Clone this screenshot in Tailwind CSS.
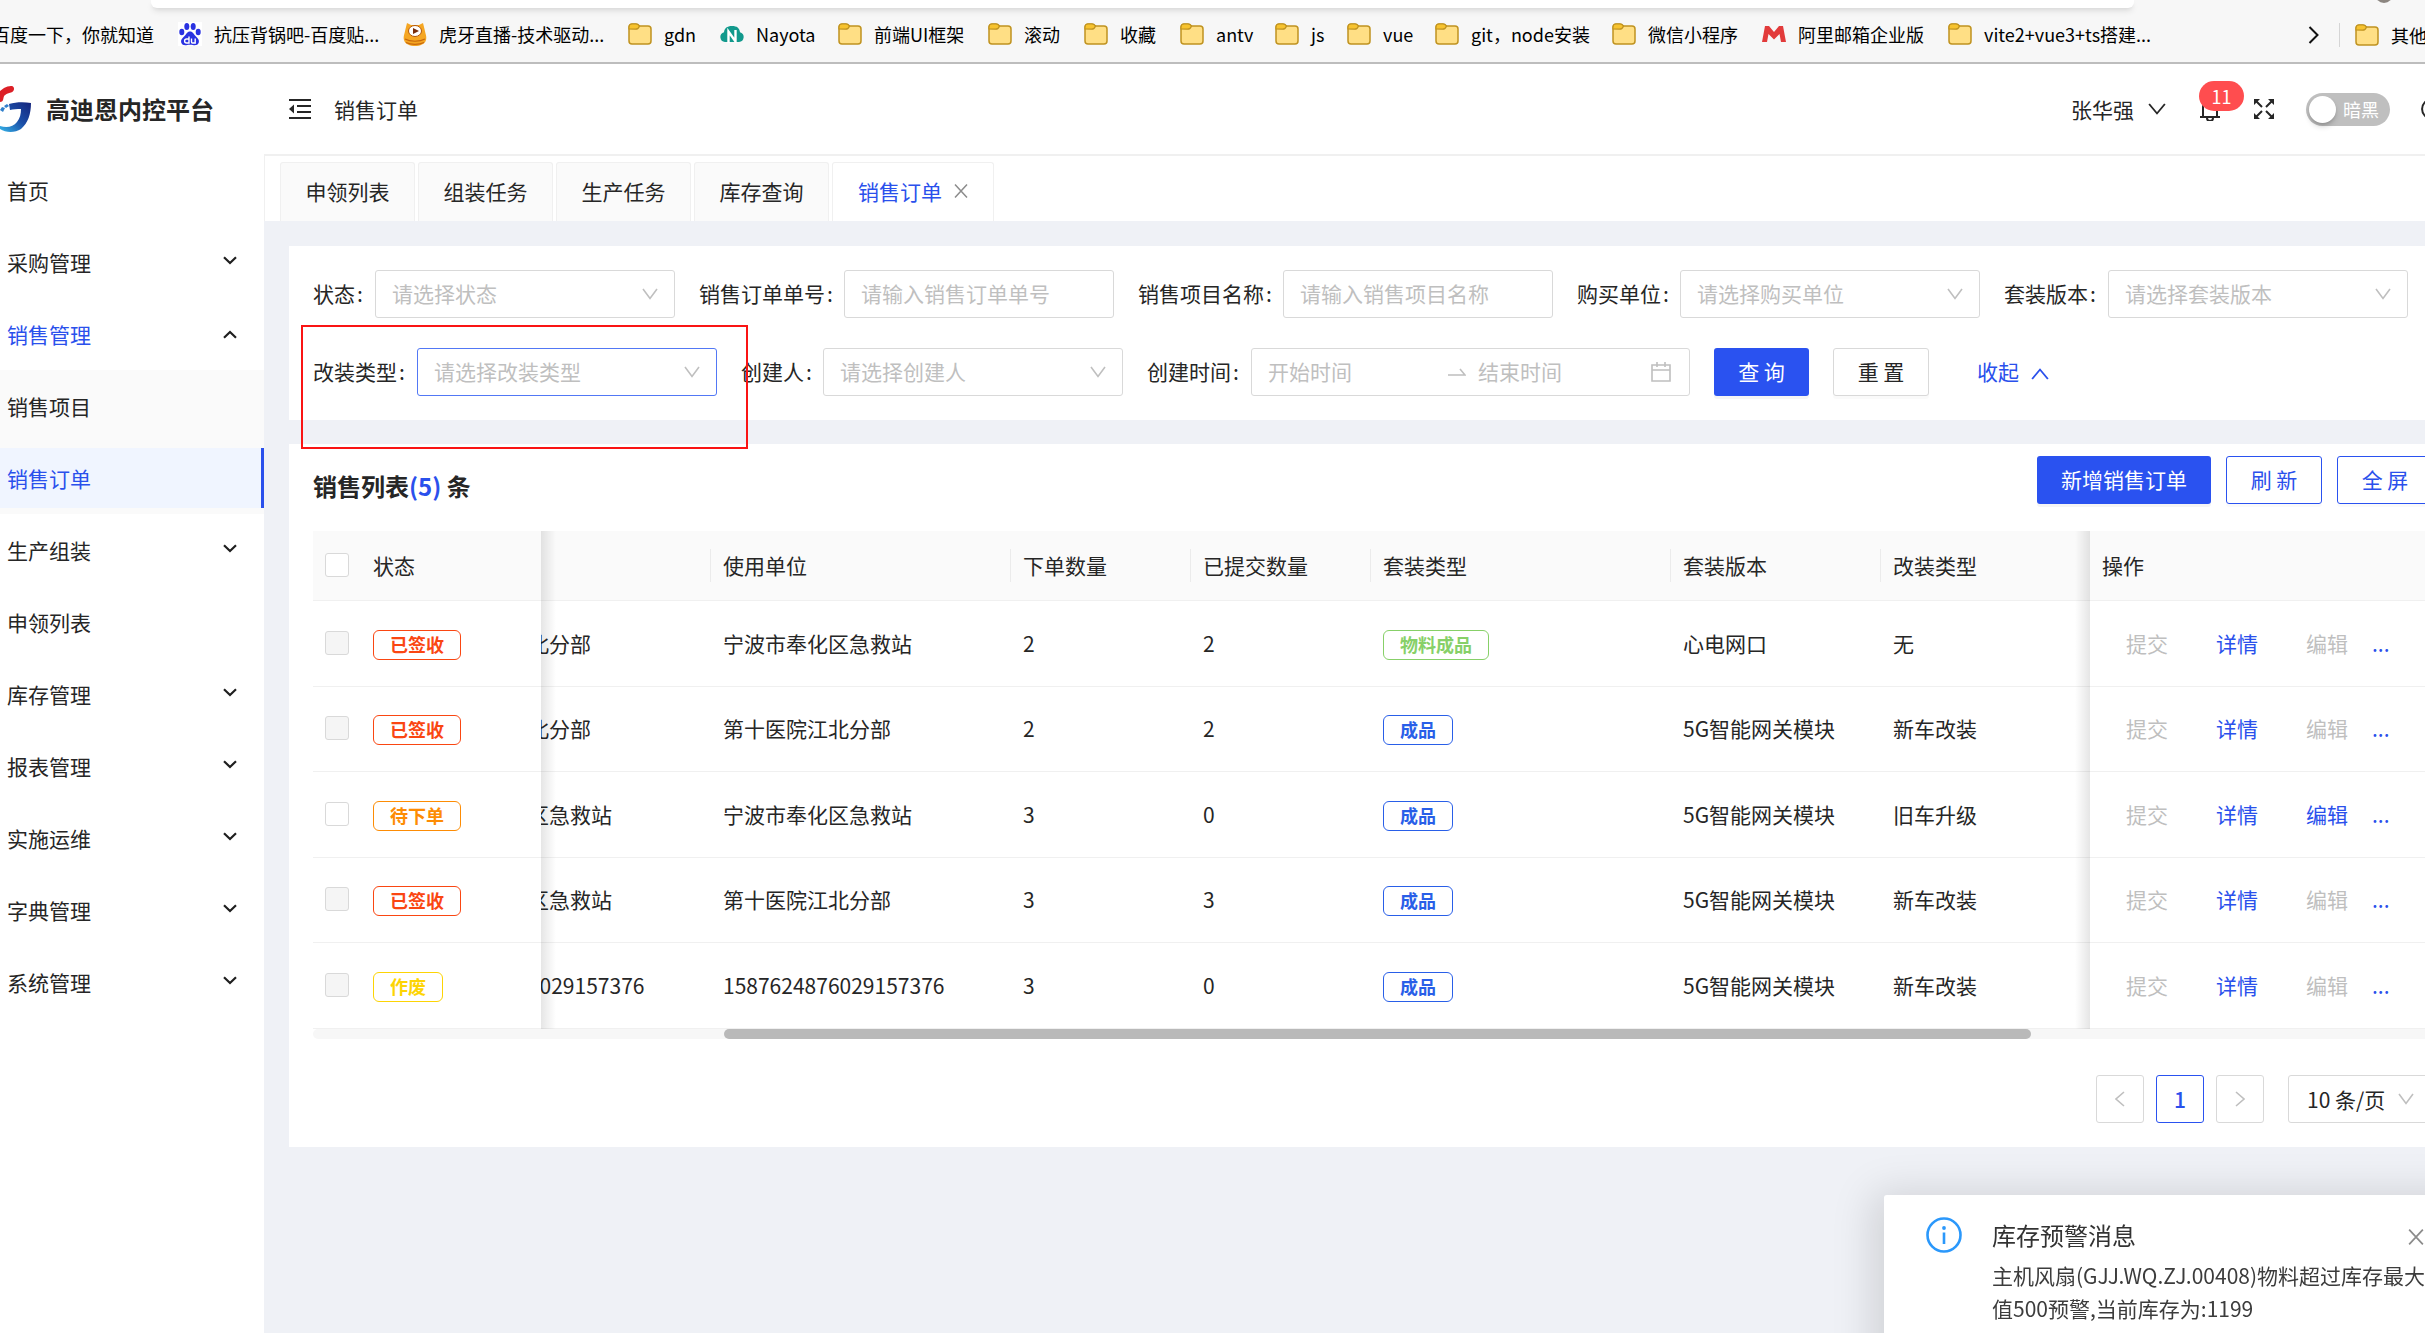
<!DOCTYPE html>
<html lang="zh-CN">
<head>
<meta charset="utf-8">
<title>高迪恩内控平台</title>
<script src="https://cdn.jsdelivr.net/npm/@tailwindcss/browser@4"></script>
</head>
<body class="overflow-hidden bg-[#eff1f6] font-['Noto_Sans_CJK_SC',sans-serif] text-[21px] leading-8 text-[#262626]">
<svg class="hidden">
  <symbol id="folder" viewBox="0 0 24 22"><path d="M1 4a3 3 0 0 1 3-3h4c2 0 3 1.400 3.500 2H20a3 3 0 0 1 3 3v12a3 3 0 0 1-3 3H4a3 3 0 0 1-3-3z" fill="#ffdf85" stroke="#c09320" stroke-width="1.500"/><path d="M1 6V4a3 3 0 0 1 3-3h4c2 0 3 1.400 3.500 2-.6 2-1.800 3.200-4 3.200z" fill="#f7c32f" stroke="#c09320" stroke-width="1.200"/></symbol>
  <symbol id="down" viewBox="0 0 16 12"><path d="M1 1l7 9.500L15 1" fill="none" stroke="currentColor" stroke-width="1.600"/></symbol>
  <symbol id="caret" viewBox="0 0 14 9"><path d="M1 1.200l6 5.800 6-5.800" fill="none" stroke="#1f1f1f" stroke-width="2.200"/></symbol>
  <symbol id="cross" viewBox="0 0 14 14"><path d="M1 0.500l12 13M13 0.500l-12 13" fill="none" stroke="currentColor" stroke-width="1.500"/></symbol>
</svg>

<nav class="relative flex h-16 items-center overflow-hidden border-b-2 border-[#bdbdbd] bg-[#f7f7f7] pt-[6px] text-[18px] leading-6 whitespace-nowrap text-black" aria-label="收藏夹栏">
  <div class="absolute top-0 right-[291px] left-[151px] h-2 rounded-b-md bg-white shadow-md shadow-black/10"></div>
  <div class="absolute -top-[15px] right-[32px] size-[18px] rounded-full bg-[#8c8680]"></div>
  <div class="-ml-2 flex shrink-0 gap-6">
    <a href="#" class="w-[162px]">百度一下，你就知道</a>
    <a href="#" class="flex w-[201px] items-center gap-3">
      <svg class="size-6 shrink-0 bg-white" viewBox="0 0 24 24" fill="#2932e1"><ellipse cx="3.800" cy="10" rx="2.500" ry="3.300"/><ellipse cx="8.800" cy="4.600" rx="2.500" ry="3.500"/><ellipse cx="15.200" cy="4.600" rx="2.500" ry="3.500"/><ellipse cx="20.200" cy="10" rx="2.500" ry="3.300"/><path d="M12 9.500c-3 0-3.500 2.500-5.500 4.500C4 16.300 2.500 18 3.200 20.500c.8 3 4 3 6 2.500 2-.4 3.600-.4 5.600 0s5.200.5 6-2.500c.7-2.500-.8-4.200-3.300-6.500-2-2-2.500-4.500-5.500-4.500z"/><path d="M11 14.500v6.500H8.600a2 2 0 1 1 0-4H11M13.500 16.500V20c0 .7.300 1 1 1h2.700v-4.500" fill="none" stroke="#fff" stroke-width="1.400"/></svg>抗压背锅吧-百度贴...</a>
    <a href="#" class="flex w-[201px] items-center gap-3">
      <svg class="size-6 shrink-0" viewBox="0 0 24 24"><path d="M4 1l4 2h8l4-2 1.500 6c1 5 2.500 8 1.500 11-1 4-6 6-11 6S2 22 1 18c-1-3 .5-6 1.500-11z" fill="#f5a623"/><path d="M2 17c5 3 15 3 20 0M3 20.500c5 2.500 13 2.500 18 0" stroke="#c8680c" stroke-width="1.200" fill="none"/><ellipse cx="12" cy="9" rx="6.500" ry="5.500" fill="#fff" stroke="#b4580a"/><path d="M10 6l6 3-6 3z" fill="#7a2e0c"/></svg>虎牙直播-技术驱动...</a>
    <a href="#" class="flex w-[68px] items-center gap-3"><svg class="h-[22px] w-6 shrink-0"><use href="#folder"/></svg>gdn</a>
    <a href="#" class="flex w-[94px] items-center gap-3">
      <svg class="h-[18px] w-6 shrink-0" viewBox="0 2 24 18"><path d="M5 19a5 5 0 0 1-1-9.800c.5-4 3-6.200 8-6.200s7.500 2 8 6.200a5 5 0 0 1-1 9.800z" fill="#12998c"/><path d="M8.500 20V8.500l7 10V7" stroke="#fff" stroke-width="2.400" fill="none"/></svg>Nayota</a>
    <a href="#" class="flex w-[126px] items-center gap-3"><svg class="h-[22px] w-6 shrink-0"><use href="#folder"/></svg>前端UI框架</a>
    <a href="#" class="flex w-[72px] items-center gap-3"><svg class="h-[22px] w-6 shrink-0"><use href="#folder"/></svg>滚动</a>
    <a href="#" class="flex w-[72px] items-center gap-3"><svg class="h-[22px] w-6 shrink-0"><use href="#folder"/></svg>收藏</a>
    <a href="#" class="flex w-[71px] items-center gap-3"><svg class="h-[22px] w-6 shrink-0"><use href="#folder"/></svg>antv</a>
    <a href="#" class="flex w-[48px] items-center gap-3"><svg class="h-[22px] w-6 shrink-0"><use href="#folder"/></svg>js</a>
    <a href="#" class="flex w-[64px] items-center gap-3"><svg class="h-[22px] w-6 shrink-0"><use href="#folder"/></svg>vue</a>
    <a href="#" class="flex w-[153px] items-center gap-3"><svg class="h-[22px] w-6 shrink-0"><use href="#folder"/></svg>git，node安装</a>
    <a href="#" class="flex w-[126px] items-center gap-3"><svg class="h-[22px] w-6 shrink-0"><use href="#folder"/></svg>微信小程序</a>
    <a href="#" class="flex w-[162px] items-center gap-3">
      <svg class="h-4 w-6 shrink-0" viewBox="0 0 24 16"><path d="M0 16L3 0h4l5 6 5-6h4l3 16h-5l-1.500-8L12 13.500 6.500 8 5 16z" fill="#e23b3b"/></svg>阿里邮箱企业版</a>
    <a href="#" class="flex w-[200px] items-center gap-3"><svg class="h-[22px] w-6 shrink-0"><use href="#folder"/></svg>vite2+vue3+ts搭建...</a>
  </div>
  <div class="absolute right-0 bottom-0 flex h-[54px] items-center">
    <button aria-label="更多收藏"><svg class="mr-5 h-[18px] w-[11px]" viewBox="0 0 11 18"><path d="M1.500 1l8 8-8 8" fill="none" stroke="#111" stroke-width="2"/></svg></button>
    <span class="mr-[15px] h-6 w-px bg-[#d5d5d5]"></span>
    <a href="#" class="flex w-[70px] items-center gap-3 overflow-hidden"><svg class="h-[22px] w-6 shrink-0"><use href="#folder"/></svg>其他收藏夹</a>
  </div>
</nav>

<div class="-mr-[71px] flex min-h-[calc(100vh-64px)]">
  <aside class="w-[264px] shrink-0 bg-white">
    <div class="flex h-[90px] items-center text-[24px] font-bold">
      <svg class="mr-[15px] h-[46px] w-[31px]" viewBox="0 0 31 46"><defs><linearGradient id="lg" x1="0" y1="1" x2="1" y2="0"><stop offset="0" stop-color="#35b5e9"/><stop offset=".5" stop-color="#1b4fa8"/><stop offset="1" stop-color="#15247c"/></linearGradient></defs><path d="M4 2c3-1.500 7-2.500 9-1.500 2 1.500 1 5-2 6C6 8 4 9 3.500 12c-.5 3-1.500 4-3.500 4V5z" fill="#dc2027"/><path d="M9 18c7-2 15-2 22-1 0 11-3 20-10 26-6 4-15 4-21 0v-3c7 2 13 1 17-4 3-4 4-8 4-13-4 0-8 0-11 1z" fill="url(#lg)"/><path d="M0 24l2-3 3 1-2 4zM4 20l3-2 2 2-3 2z" fill="#2f7fcb"/></svg>
      <h1>高迪恩内控平台</h1>
    </div>
    <ul class="flex flex-col gap-3 pt-[6px]" id="menu">
      <li><a href="#" class="flex h-[60px] items-center pl-[7px]">首页</a></li>
      <li><a href="#" class="flex h-[60px] items-center justify-between pr-[27px] pl-[7px]">采购管理<svg class="mb-1 h-[9px] w-[14px]"><use href="#caret"/></svg></a></li>
      <li><a href="#" class="flex h-[60px] items-center justify-between pr-[27px] pl-[7px] text-[#2a50ec]">销售管理<svg class="h-[9px] w-[14px] rotate-180"><use href="#caret"/></svg></a></li>
      <li class="-mt-[6px] -mb-2 flex flex-col gap-3 bg-[#fafafa] py-[6px]">
        <a href="#" class="flex h-[60px] items-center pl-[7px]">销售项目</a>
        <a href="#" aria-current="page" class="flex h-[60px] items-center border-r-[3px] border-[#2a50ec] bg-[#f0f5ff] pl-[7px] text-[#2a50ec]">销售订单</a>
      </li>
      <li class="pt-[2px]"><a href="#" class="flex h-[60px] items-center justify-between pr-[27px] pl-[7px]">生产组装<svg class="mb-1 h-[9px] w-[14px]"><use href="#caret"/></svg></a></li>
      <li><a href="#" class="flex h-[60px] items-center pl-[7px]">申领列表</a></li>
      <li><a href="#" class="flex h-[60px] items-center justify-between pr-[27px] pl-[7px]">库存管理<svg class="mb-1 h-[9px] w-[14px]"><use href="#caret"/></svg></a></li>
      <li><a href="#" class="flex h-[60px] items-center justify-between pr-[27px] pl-[7px]">报表管理<svg class="mb-1 h-[9px] w-[14px]"><use href="#caret"/></svg></a></li>
      <li><a href="#" class="flex h-[60px] items-center justify-between pr-[27px] pl-[7px]">实施运维<svg class="mb-1 h-[9px] w-[14px]"><use href="#caret"/></svg></a></li>
      <li><a href="#" class="flex h-[60px] items-center justify-between pr-[27px] pl-[7px]">字典管理<svg class="mb-1 h-[9px] w-[14px]"><use href="#caret"/></svg></a></li>
      <li><a href="#" class="flex h-[60px] items-center justify-between pr-[27px] pl-[7px]">系统管理<svg class="mb-1 h-[9px] w-[14px]"><use href="#caret"/></svg></a></li>
    </ul>
  </aside>

  <main class="min-w-0 flex-1">
    <header class="flex h-[92px] items-center border-b-2 border-[#f0f0f0] bg-white pl-[25px]">
      <button aria-label="收起菜单"><svg class="h-5 w-[22px]" viewBox="0 0 22 20"><path d="M0 1h22M8 7h14M8 13h14M0 19h22" stroke="#262626" stroke-width="2"/><path d="M5 5.500v9L0 10z" fill="#262626"/></svg></button>
      <span class="ml-[23px]">销售订单</span>
      <div class="ml-auto flex items-center pr-[53px]">
        <button class="flex items-center gap-[14px]">张华强<svg class="h-3 w-[18px]" viewBox="0 0 16 12" preserveAspectRatio="none"><use href="#down"/></svg></button>
        <button class="relative ml-[34px] h-6 w-5" aria-label="消息">
          <svg class="h-6 w-5" viewBox="0 0 20 24"><path d="M0 20h20M3 20V10a7 7 0 0 1 14 0v10M7 21a3 3 0 0 0 6 0M10 1v2" fill="none" stroke="#262626" stroke-width="2"/></svg>
          <span class="absolute -top-[16px] -left-px h-[30px] w-[45px] rounded-full bg-[#ff4d4f] text-center text-[18px] leading-[30px] text-white">11</span>
        </button>
        <button class="ml-[34px]" aria-label="全屏"><svg class="size-5" viewBox="0 0 20 20"><path d="M2 2l6 6M18 2l-6 6M2 18l6-6M18 18l-6-6" stroke="#262626" stroke-width="2"/><path d="M0 0h6L0 6zM20 0h-6l6 6zM0 20h6l-6-6zM20 20h-6l6-6z" fill="#262626"/></svg></button>
        <button role="switch" aria-checked="false" class="ml-8 flex h-[33px] w-[84px] items-center rounded-full bg-[#bfbfbf] pl-[3px] text-[18px] text-white"><span class="mr-[7px] size-[27px] rounded-full bg-white shadow-md shadow-black/20"></span>暗黑</button>
        <button class="ml-[31px]" aria-label="退出"><svg class="size-[22px]" viewBox="0 0 22 22"><path d="M17 4a9.500 9.500 0 1 0 0 14" fill="none" stroke="#262626" stroke-width="2"/></svg></button>
      </div>
    </header>

    <div class="flex h-[65px] items-end gap-[3px] border-l border-[#f0f0f0] bg-white pl-[15px]">
      <button class="h-[59px] w-[135px] rounded-t-[3px] border border-b-0 border-[#f0f0f0] bg-[#fafafa] pb-[2px]">申领列表</button>
      <button class="h-[59px] w-[135px] rounded-t-[3px] border border-b-0 border-[#f0f0f0] bg-[#fafafa] pb-[2px]">组装任务</button>
      <button class="h-[59px] w-[135px] rounded-t-[3px] border border-b-0 border-[#f0f0f0] bg-[#fafafa] pb-[2px]">生产任务</button>
      <button class="h-[59px] w-[135px] rounded-t-[3px] border border-b-0 border-[#f0f0f0] bg-[#fafafa] pb-[2px]">库存查询</button>
      <button class="flex h-[59px] items-center gap-3 rounded-t-[3px] border border-b-0 border-[#f0f0f0] bg-white px-[25px] pb-[2px] text-[#2a50ec]">销售订单<svg class="size-[14px] text-[#8c8c8c]"><use href="#cross"/></svg></button>
    </div>

    <div class="flex flex-col gap-6 py-[25px] pr-6 pl-[25px]">
      <form class="relative flex flex-col gap-[30px] bg-white p-6 whitespace-nowrap">
        <div class="flex gap-6">
          <div class="flex h-12 items-center"><label for="f1" class="pr-3 pb-[2px]">状态<span class="inline-block w-2 pl-[2px]">:</span></label><div class="relative"><select id="f1" class="h-12 w-[300px] appearance-none rounded-[3px] border border-[#d9d9d9] bg-white px-4 pb-[2px] text-[#bfbfbf]"><option>请选择状态</option></select><svg class="pointer-events-none absolute top-[18px] right-[17px] h-3 w-4 text-[#bfbfbf]"><use href="#down"/></svg></div></div>
          <div class="flex h-12 items-center"><label for="f2" class="pr-[11px] pb-[2px]">销售订单单号<span class="inline-block w-2 pl-[2px]">:</span></label><input id="f2" placeholder="请输入销售订单单号" class="h-12 w-[270px] rounded-[3px] border border-[#d9d9d9] px-4 pb-[2px] placeholder:text-[#bfbfbf]"></div>
          <div class="flex h-12 items-center"><label for="f3" class="pr-[11px] pb-[2px]">销售项目名称<span class="inline-block w-2 pl-[2px]">:</span></label><input id="f3" placeholder="请输入销售项目名称" class="h-12 w-[270px] rounded-[3px] border border-[#d9d9d9] px-4 pb-[2px] placeholder:text-[#bfbfbf]"></div>
          <div class="flex h-12 items-center"><label for="f4" class="pr-[11px] pb-[2px]">购买单位<span class="inline-block w-2 pl-[2px]">:</span></label><div class="relative"><select id="f4" class="h-12 w-[300px] appearance-none rounded-[3px] border border-[#d9d9d9] bg-white px-4 pb-[2px] text-[#bfbfbf]"><option>请选择购买单位</option></select><svg class="pointer-events-none absolute top-[18px] right-[17px] h-3 w-4 text-[#bfbfbf]"><use href="#down"/></svg></div></div>
          <div class="flex h-12 items-center"><label for="f5" class="pr-3 pb-[2px]">套装版本<span class="inline-block w-2 pl-[2px]">:</span></label><div class="relative"><select id="f5" class="h-12 w-[300px] appearance-none rounded-[3px] border border-[#d9d9d9] bg-white px-4 pb-[2px] text-[#bfbfbf]"><option>请选择套装版本</option></select><svg class="pointer-events-none absolute top-[18px] right-[17px] h-3 w-4 text-[#bfbfbf]"><use href="#down"/></svg></div></div>
        </div>
        <div class="flex gap-6">
          <div class="flex h-12 items-center"><label for="f6" class="pr-3 pb-[2px]">改装类型<span class="inline-block w-2 pl-[2px]">:</span></label><div class="relative"><select id="f6" class="h-12 w-[300px] appearance-none rounded-[3px] border border-[#5278f5] bg-white px-4 pb-[2px] text-[#bfbfbf]"><option>请选择改装类型</option></select><svg class="pointer-events-none absolute top-[18px] right-[17px] h-3 w-4 text-[#bfbfbf]"><use href="#down"/></svg></div></div>
          <div class="flex h-12 items-center"><label for="f7" class="pr-[11px] pb-[2px]">创建人<span class="inline-block w-2 pl-[2px]">:</span></label><div class="relative"><select id="f7" class="h-12 w-[300px] appearance-none rounded-[3px] border border-[#d9d9d9] bg-white px-4 pb-[2px] text-[#bfbfbf]"><option>请选择创建人</option></select><svg class="pointer-events-none absolute top-[18px] right-[17px] h-3 w-4 text-[#bfbfbf]"><use href="#down"/></svg></div></div>
          <div class="flex h-12 items-center"><label for="f8" class="pr-3 pb-[2px]">创建时间<span class="inline-block w-2 pl-[2px]">:</span></label>
            <div class="flex h-12 w-[439px] items-center rounded-[3px] border border-[#d9d9d9] px-4">
              <input id="f8" placeholder="开始时间" class="w-[180px] min-w-0 pb-[2px] placeholder:text-[#bfbfbf]">
              <svg class="mr-3 h-2 w-[18px] shrink-0 text-[#bfbfbf]" viewBox="0 0 18 8"><path d="M0 7h17l-5-6" fill="none" stroke="currentColor" stroke-width="1.600"/></svg>
              <input aria-label="结束时间" placeholder="结束时间" class="w-[173px] min-w-0 pb-[2px] placeholder:text-[#bfbfbf]">
              <svg class="h-5 w-[20px] shrink-0" viewBox="0 0 20 20"><path d="M1 3h18v16H1zM1 8h18M6 0v5M14 0v5" fill="none" stroke="#bfbfbf" stroke-width="1.600"/></svg>
            </div></div>
          <button type="button" class="h-12 w-[95px] rounded-[3px] bg-[#2a52f0] pb-[2px] text-white shadow-[0_3px_0_rgba(0,0,0,0.04)]">查 询</button>
          <button type="button" class="h-12 w-24 rounded-[3px] border border-[#d9d9d9] bg-white pb-[2px] shadow-[0_3px_0_rgba(0,0,0,0.02)]">重 置</button>
          <button type="button" class="ml-6 flex items-center gap-3 pb-[2px] text-[#2a50ec]">收起<svg class="mt-[6px] h-3 w-[18px] rotate-180" viewBox="0 0 16 12" preserveAspectRatio="none"><use href="#down"/></svg></button>
        </div>
        <div class="pointer-events-none absolute top-[79px] left-3 z-10 h-[124px] w-[447px] border-2 border-[#fa1414]"></div>
      </form>

      <section class="bg-white px-6 pb-6">
        <div class="flex h-[87px] items-start justify-between pt-3">
          <h2 class="pt-[14px] text-[24px] font-bold">销售列表<span class="text-[#2a50ec]">(5)</span> 条</h2>
          <div class="flex gap-[15px] pr-[15px]">
            <button class="h-12 w-[174px] rounded-[3px] bg-[#2a52f0] pb-[2px] text-white shadow-[0_3px_0_rgba(0,0,0,0.04)]">新增销售订单</button>
            <button class="h-12 w-24 rounded-[3px] border border-[#2a52f0] pb-[2px] text-[#2a50ec] shadow-[0_3px_0_rgba(0,0,0,0.02)]">刷 新</button>
            <button class="h-12 w-24 rounded-[3px] border border-[#2a52f0] pb-[2px] text-[#2a50ec] shadow-[0_3px_0_rgba(0,0,0,0.02)]">全 屏</button>
          </div>
        </div>
        <div class="overflow-hidden">
          <table class="-ml-[130px] w-[calc(100%+130px)] table-fixed border-separate border-spacing-0 text-left whitespace-nowrap">
            <colgroup><col class="w-[48px]"><col class="w-[180px]"><col class="w-[300px]"><col class="w-[300px]"><col class="w-[180px]"><col class="w-[180px]"><col class="w-[300px]"><col class="w-[210px]"><col class="w-[209px]"><col></colgroup>
            <thead>
              <tr class="h-[70px] *:border-b *:border-[#f0f0f0] *:bg-[#fafafa] *:px-3 *:pb-[2px] *:font-normal">
                <th class="sticky left-0 z-20"><input type="checkbox" aria-label="全选" class="block size-6 appearance-none rounded-[3px] border border-[#d9d9d9] bg-white"></th>
                <th class="sticky left-[48px] z-20">状态<div class="absolute top-0 -bottom-px left-full w-[15px] bg-linear-to-r from-black/10 to-transparent"></div></th>
                <th class="relative"><div class="absolute top-[18px] right-0 h-[33px] w-px bg-[#ebebeb]"></div></th>
                <th class="relative">使用单位<div class="absolute top-[18px] right-0 h-[33px] w-px bg-[#ebebeb]"></div></th>
                <th class="relative">下单数量<div class="absolute top-[18px] right-0 h-[33px] w-px bg-[#ebebeb]"></div></th>
                <th class="relative">已提交数量<div class="absolute top-[18px] right-0 h-[33px] w-px bg-[#ebebeb]"></div></th>
                <th class="relative">套装类型<div class="absolute top-[18px] right-0 h-[33px] w-px bg-[#ebebeb]"></div></th>
                <th class="relative">套装版本<div class="absolute top-[18px] right-0 h-[33px] w-px bg-[#ebebeb]"></div></th>
                <th>改装类型</th>
                <th class="sticky right-0 z-20">操作<div class="absolute top-0 right-full -bottom-px w-[15px] bg-linear-to-l from-black/10 to-transparent"></div></th>
              </tr>
            </thead>
            <tbody id="rows"></tbody>
          </table>
        </div>
        <div class="h-[10px] rounded-full bg-[#f7f7f7] pr-[417px] pl-[411px]"><div class="h-[10px] rounded-full bg-[#b9b9b9]"></div></div>
        <div class="mt-9 flex h-12 justify-end gap-3">
          <button aria-label="上一页" class="flex w-12 items-center justify-center rounded-[3px] border border-[#d9d9d9]"><svg class="h-4 w-[10px]" viewBox="0 0 10 16"><path d="M9 1L1 8l8 7" fill="none" stroke="#bfbfbf" stroke-width="1.600"/></svg></button>
          <button class="w-12 rounded-[3px] border border-[#2a52f0] font-medium text-[#2a50ec]">1</button>
          <button aria-label="下一页" class="flex w-12 items-center justify-center rounded-[3px] border border-[#d9d9d9]"><svg class="h-4 w-[10px]" viewBox="0 0 10 16"><path d="M1 1l8 7-8 7" fill="none" stroke="#bfbfbf" stroke-width="1.600"/></svg></button>
          <div class="relative ml-3"><select aria-label="每页条数" class="h-12 w-40 appearance-none rounded-[3px] border border-[#d9d9d9] bg-white pl-[18px]"><option>10 条/页</option></select><svg class="pointer-events-none absolute top-[18px] left-[110px] h-3 w-4 text-[#bfbfbf]"><use href="#down"/></svg></div>
        </div>
      </section>
    </div>
  </main>
</div>

<div role="alert" class="fixed top-[1195px] -right-[35px] z-30 flex h-[180px] w-[576px] rounded-[3px] bg-white pt-[22px] pl-[42px] shadow-[0_9px_42px_12px_rgba(0,0,0,0.13)]">
  <svg class="mr-[30px] size-9 shrink-0" viewBox="0 0 36 36"><circle cx="18" cy="18" r="16.500" fill="none" stroke="#2b98fb" stroke-width="2.600"/><circle cx="18" cy="11" r="1.900" fill="#2b98fb"/><path d="M18 15.500V27" stroke="#2b98fb" stroke-width="2.600"/></svg>
  <div>
    <p class="mb-[6px] text-[24px] leading-9 text-[#333333]">库存预警消息</p>
    <p class="w-[440px] leading-[33px] text-[#3c3c3c]">主机风扇(GJJ.WQ.ZJ.00408)物料超过库存最大值500预警,当前库存为:1199</p>
  </div>
  <button aria-label="关闭" class="absolute top-[34px] right-[36px]"><svg class="size-4 text-[#8c8c8c]"><use href="#cross"/></svg></button>
</div>

<script>
const red = "border-[#fa4612] text-[#fa4612]", orange = "border-[#fd8c04] text-[#fd8c04]", yellow = "border-[#fdd404] text-[#fdd404]";
const green = "border-[#87d068] text-[#87d068]", blue = "border-[#295fe8] text-[#295fe8]";
const orders = [
  ["已签收", red, "第十医院江北分部", "宁波市奉化区急救站", 2, 2, "物料成品", green, "心电网口", "无"],
  ["已签收", red, "第十医院江北分部", "第十医院江北分部", 2, 2, "成品", blue, "5G智能网关模块", "新车改装"],
  ["待下单", orange, "宁波市奉化区急救站", "宁波市奉化区急救站", 3, 0, "成品", blue, "5G智能网关模块", "旧车升级"],
  ["已签收", red, "宁波市奉化区急救站", "第十医院江北分部", 3, 3, "成品", blue, "5G智能网关模块", "新车改装"],
  ["作废", yellow, "1587624876029157376", "1587624876029157376", 3, 0, "成品", blue, "5G智能网关模块", "新车改装"],
];
const tag = (text, color) => `<span class="inline-block h-[30px] rounded-md border px-4 align-middle text-[18px] leading-[27px] font-bold ${color}">${text}</span>`;
document.getElementById("rows").innerHTML = orders.map(o => {
  const open = o[0] === "待下单";
  return `<tr class="odd:h-[86px] even:h-[85px] *:border-b *:border-[#f0f0f0] *:px-3 *:pb-[2px]">
    <td class="sticky left-0 z-10 bg-white"><input type="checkbox" aria-label="选择" ${open ? "" : "disabled"} class="block size-6 appearance-none rounded-[3px] border border-[#d9d9d9] bg-white disabled:bg-[#f5f5f5]"></td>
    <td class="sticky left-[48px] z-10 bg-white">${tag(o[0], o[1])}<div class="absolute top-0 -bottom-px left-full w-[15px] bg-linear-to-r from-black/10 to-transparent"></div></td>
    <td>${o[2]}</td><td>${o[3]}</td><td>${o[4]}</td><td>${o[5]}</td><td>${tag(o[6], o[7])}</td><td>${o[8]}</td><td>${o[9]}</td>
    <td class="sticky right-0 z-10 bg-white"><div class="flex pl-6 text-[#2a50ec]"><button disabled class="w-[90px] text-left text-[#bfbfbf]">提交</button><button class="w-[90px] text-left">详情</button><button ${open ? "" : "disabled"} class="w-[66px] text-left disabled:text-[#bfbfbf]">编辑</button><button>...</button></div><div class="absolute top-0 right-full -bottom-px w-[15px] bg-linear-to-l from-black/10 to-transparent"></div></td>
  </tr>`;
}).join("");
</script>
</body>
</html>
